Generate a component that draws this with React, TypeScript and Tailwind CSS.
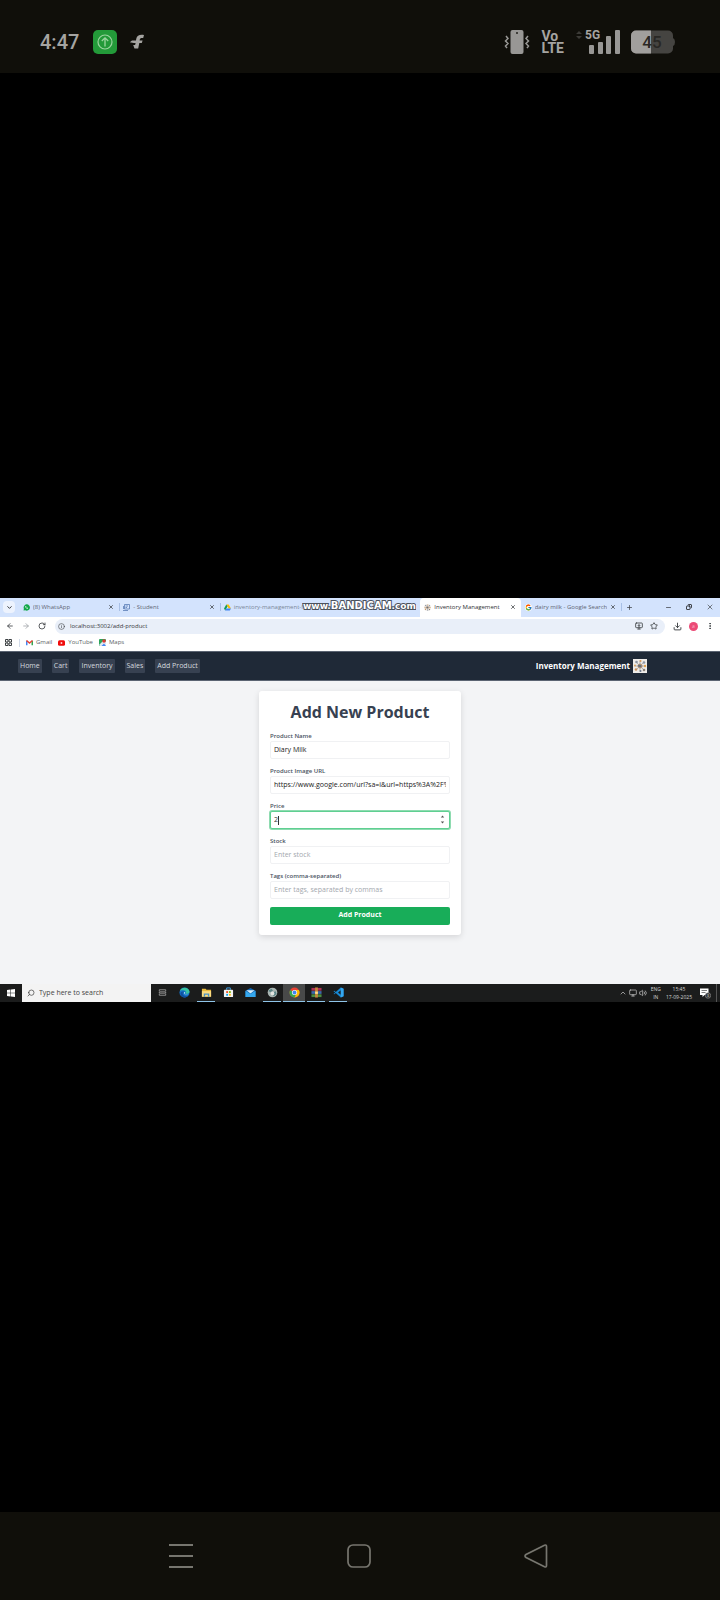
import React from "react";
import {
  ArrowLeft, ArrowRight, ChevronDown, ChevronUp, Download, Info, Minus,
  MonitorDown, Plus, RotateCw, Search, Star, X, Copy, EllipsisVertical, Volume2, Monitor,
} from "lucide-react";
import { FcGoogle } from "react-icons/fc";

const uiFont = "font-['Open_Sans','Noto_Sans',sans-serif]";

function Drive() {
  return (
    <svg viewBox="0 0 24 21" className="size-[7px] shrink-0">
      <path d="M8 0h8l8 14h-8z" fill="#fbbc04" />
      <path d="M8 0l4 7-8 14-4-7z" fill="#0f9d58" />
      <path d="M8 14h16l-4 7H4z" fill="#4285f4" />
    </svg>
  );
}

function WhatsApp() {
  return (
    <svg viewBox="0 0 14 14" className="size-[7px] shrink-0">
      <path d="M1 13l.8-3.500A6.300 6.300 0 1 1 4.500 12.500z" fill="#12a84a" />
      <path d="M4.500 4.500c0 3 2 5 5 5l.5-1.500-1.500-.8-.8.8-1.700-1.700.8-.8L6 4z" fill="#fff" />
    </svg>
  );
}

function PackageArt({ className }: { className: string }) {
  return (
    <svg viewBox="0 0 28 28" className={className}>
      <rect width="28" height="28" fill="#eeebe8" />
      <path d="M14 3v8M14 17v8M3 14h7M18 14h7M6 6l5 5M17 17l5 5M22 6l-5 5M11 17l-5 5" stroke="#8a8f99" strokeWidth="1.2" />
      <circle cx="14" cy="14" r="5" fill="#b99a7c" />
      <circle cx="7" cy="6" r="2.600" fill="#8b93a1" />
      <circle cx="15" cy="4" r="2" fill="#d99a55" />
      <circle cx="22" cy="7" r="2.600" fill="#8d97a8" />
      <circle cx="6" cy="21" r="2.600" fill="#c9915b" />
      <circle cx="15" cy="24" r="2" fill="#68758a" />
      <circle cx="22" cy="22" r="2.600" fill="#8a8078" />
      <circle cx="4" cy="13" r="2" fill="#d9a05b" />
      <circle cx="24" cy="14" r="2.400" fill="#e0a04c" />
      <path d="M10 12l4-1 3 2v3l-3 1-4-2z" fill="#68707e" />
    </svg>
  );
}

function StatusBar() {
  return (
    <header className="flex h-[73px] items-center bg-[#100f0a] pt-[11px] pr-[45px] pl-[40px] text-[#a5a4a1]">
      <span className="font-['Roboto',sans-serif] text-[20px] leading-6 font-medium">4:47</span>
      <svg viewBox="0 0 24 24" className="ml-[14px] size-6" fill="none">
        <rect width="24" height="24" rx="5" fill="#239a39" />
        <circle cx="12" cy="12" r="7" stroke="#9bd49f" strokeWidth="1.2" />
        <path d="M12 16.500V8M8.800 11l3.200-3.200 3.200 3.200" stroke="#9bd49f" strokeWidth="1.3" />
      </svg>
      <svg viewBox="0 0 16 16" className="ml-[12px] size-4">
        <path d="M15 1C10.500.3 8 1.500 7.200 5L7 6.500H3L.8 8.200l4 .8h1.800l-.5 2H4.200l1.300 3.500h3.700L10.300 9h2.500l.8-2.500h-3l.2-1c.2-1.200.9-1.800 3.400-1.500z" fill="#a5a4a1" />
      </svg>
      <div className="ml-auto flex items-center">
        <svg viewBox="0 0 26 26" className="size-[26px]" fill="none" stroke="#989795" strokeWidth="1.500">
          <rect x="6.500" y="1" width="13" height="24" rx="2" fill="#989795" stroke="none" />
          <circle cx="13" cy="4" r="1" fill="#22211d" stroke="none" />
          <path d="M2 7l2 2.500L1.500 12 4 14.500 1.500 17l1.500 2M24 7l-2 2.500 2.500 2.500-2.500 2.500 2.500 2.500-1.500 2" />
        </svg>
        <div className="ml-[11px] flex flex-col font-['Roboto',sans-serif] text-sm leading-3 font-bold">
          <span>Vo</span>
          <span>LTE</span>
        </div>
        <div className="relative ml-[12px] h-6 w-[44px]">
          <svg viewBox="0 0 44 24" className="size-full" fill="#989795">
            <path d="M0 4l3-3 3 3zM0 6l3 3 3-3z" fill="#3c3b37" />
            <rect x="13" y="15" width="5" height="9" rx="1" />
            <rect x="22" y="12" width="5" height="12" rx="1" />
            <rect x="30" y="6" width="5" height="18" rx="1" />
            <rect x="39" y="0" width="5" height="24" rx="1" />
          </svg>
          <span className="absolute top-0 left-[9px] font-['Roboto',sans-serif] text-xs leading-[10px] font-bold">5G</span>
        </div>
        <div className="relative ml-[11px] h-6 w-11">
          <svg viewBox="0 0 44 24" className="size-full">
            <rect width="42" height="23" y=".5" rx="5" fill="#454441" />
            <path d="M5 .5h15v23H5a5 5 0 0 1-5-5v-13a5 5 0 0 1 5-5z" fill="#a19f9d" />
            <path d="M42 8q2 1 2 4t-2 4z" fill="#454441" />
          </svg>
          <span className="absolute inset-x-0 top-0 pr-[2px] text-center font-['Roboto',sans-serif] text-[17px] leading-6 font-medium text-[#292825]">45</span>
        </div>
      </div>
    </header>
  );
}

function Tab({ icon, title, active, divided }: { icon: React.ReactNode; title: string; active?: boolean; divided?: boolean }) {
  return (
    <div className={`flex min-w-0 items-center gap-[3px] pr-[5px] pl-1 ${active ? "rounded-t-[4px] bg-white text-[#303134]" : "text-[#5f6673]"}`}>
      {divided && <span className="-ml-1 h-2 w-px bg-[#a8c0e6]" />}
      {icon}
      <span className="flex-1 overflow-hidden text-[6px] leading-[8px] whitespace-nowrap">{title}</span>
      <button aria-label={`Close ${title}`}><X className="size-[6px] text-[#3c4043]" strokeWidth={3} /></button>
    </div>
  );
}

function Browser() {
  return (
    <div>
      <div className="relative flex h-[19px] bg-[#d3e3fd]">
        <div className="flex w-[19px] items-center pl-[3px]">
          <button aria-label="Search tabs" className="flex size-3 items-center justify-center rounded-[4px] bg-[#edf3fe]">
            <ChevronDown className="size-[7px] text-[#202124]" strokeWidth={3} />
          </button>
        </div>
        <div className="grid min-w-0 flex-1 grid-cols-6">
          <Tab icon={<WhatsApp />} title="(8) WhatsApp" />
          <Tab divided icon={<svg viewBox="0 0 14 14" className="size-[7px] shrink-0" fill="none" stroke="#5276b0" strokeWidth="1.500"><path d="M3 1h10v9H3zM0 13h10M1 4v6M5 4h5M5 7h3" /></svg>} title="- Student" />
          <div className="col-span-2 flex items-center gap-[3px]">
            <span className="h-2 w-px bg-[#a8c0e6]" />
            <Drive />
            <span className="text-[6px] leading-[8px] whitespace-nowrap text-[#7b8799]">inventory-management-fr</span>
          </div>
          <Tab active icon={<PackageArt className="size-[7px] shrink-0 rounded-full" />} title="Inventory Management" />
          <Tab icon={<FcGoogle className="size-[7px] shrink-0 rounded-full bg-white" />} title="dairy milk - Google Search" />
        </div>
        <div className="flex w-[99px] items-center pr-[6px] text-[#3c4043]">
          <span className="h-2 w-px bg-[#a8c0e6]" />
          <button aria-label="New tab" className="ml-[4px]"><Plus className="size-[7px]" strokeWidth={2.500} /></button>
          <button aria-label="Minimize" className="ml-auto"><Minus className="size-[7px]" strokeWidth={2.500} /></button>
          <button aria-label="Restore" className="ml-[14px]"><Copy className="size-[6px] -scale-x-100 text-[#111]" strokeWidth={3} /></button>
          <button aria-label="Close window" className="ml-[14px]"><X className="size-[8px]" strokeWidth={2} /></button>
        </div>
        <svg viewBox="0 0 114 12" className="absolute top-[2px] left-[42%] h-3 w-[114px]">
          <g fill="#fff" stroke="#4c525d" strokeWidth="2" paintOrder="stroke" fontFamily="DejaVu Sans, sans-serif" fontWeight="bold">
            <text x="1" y="9" fontSize="9">www.<tspan fontSize="10">BANDICAM</tspan><tspan>.com</tspan></text>
          </g>
        </svg>
      </div>

      <div className="flex h-[19px] items-center bg-white pr-[6px] pl-[6px] text-[#3c4043]">
        <button aria-label="Back"><ArrowLeft className="size-[8px]" strokeWidth={2.500} /></button>
        <button aria-label="Forward" className="ml-[8px]"><ArrowRight className="size-[8px] text-[#a0a3a8]" strokeWidth={2.500} /></button>
        <button aria-label="Reload" className="ml-[8px]"><RotateCw className="size-[8px]" strokeWidth={2.500} /></button>
        <div className="ml-[9px] flex h-[15px] min-w-0 flex-1 items-center gap-[5px] rounded-full bg-[#e9eff9] pr-[7px] pl-[3px]">
          <Info className="size-[7px]" strokeWidth={2} />
          <input aria-label="Address" defaultValue="localhost:3002/add-product" className="h-[11px] min-w-0 flex-1 bg-transparent text-[6px] text-[#35373b] outline-none" />
          <MonitorDown className="size-[8px]" strokeWidth={2.500} />
          <Star className="ml-[2px] size-[8px]" strokeWidth={2.500} />
        </div>
        <button aria-label="Downloads" className="ml-[8px]"><Download className="size-[9px]" strokeWidth={2.500} /></button>
        <button aria-label="Profile" className="ml-[7px] size-[9px] rounded-full bg-[#ec4b77] text-center text-[5px] leading-[9px] text-[#f9b4c6]">a</button>
        <button aria-label="Menu" className="ml-[8px]"><EllipsisVertical className="size-[8px]" strokeWidth={3} /></button>
      </div>

      <div className="flex h-[15px] items-center bg-white pb-px pl-[5px] text-[6px] text-[#5b5f66]">
        <svg viewBox="0 0 14 14" className="size-[7px]" fill="none" stroke="#3c4043" strokeWidth="2"><path d="M1 1h5v5H1zM8 1h5v5H8zM1 8h5v5H1zM8 8h5v5H8z" /></svg>
        <span className="ml-[7px] h-2 w-px bg-[#d3dcea]" />
        <a href="#gmail" className="ml-[6px] flex items-center gap-[3px]">
          <svg viewBox="0 0 14 11" className="size-[7px]" fill="none">
            <path d="M1.500 11V2" stroke="#4285f4" strokeWidth="3" />
            <path d="M12.500 11V2" stroke="#34a853" strokeWidth="3" />
            <path d="M1 1.500l6 5 6-5" stroke="#ea4335" strokeWidth="3" />
          </svg>Gmail
        </a>
        <a href="#youtube" className="ml-[6px] flex items-center gap-[3px]">
          <svg viewBox="0 0 14 11" className="h-[6px] w-[7px]"><rect width="14" height="11" rx="3" fill="#f00b0b" /><path d="M5.500 3v5l4-2.500z" fill="#fff" /></svg>YouTube
        </a>
        <a href="#maps" className="ml-[6px] flex items-center gap-[3px]">
          <svg viewBox="0 0 14 14" className="size-[7px]">
            <rect width="14" height="14" rx="2" fill="#2da45b" /><path d="M0 12L10 2l4 4v8H2z" fill="#e2e8ef" /><path d="M5 14l5-5 4 5z" fill="#4285f4" /><circle cx="10" cy="4" r="3.500" fill="#e03a32" />
          </svg>Maps
        </a>
      </div>
    </div>
  );
}

const navItems = ["Home", "Cart", "Inventory", "Sales", "Add Product"];
const fieldClass = "block h-[18px] w-full rounded-[2px] border border-[#f0f1f3] bg-white px-[3px] text-[7px] text-[#222] outline-none placeholder:text-[#a3a7ae]";
const labelClass = "block h-[9px] text-[6px] leading-[9px] font-semibold text-[#4a5361]";

function Page() {
  return (
    <div className="bg-[#f3f4f6] pb-[49px]">
      <nav className="flex h-[30px] items-center border-t border-b border-[#5b6472] bg-[#1f2937] pt-px pr-[73px] pl-[18px]">
        <div className="flex gap-[10px]">
          {navItems.map((item) => (
            <a key={item} href={`#${item}`} className="h-[14px] rounded-[1px] bg-[#374151] px-[2px] text-[7px] leading-[13px] text-[#d5d9df]">{item}</a>
          ))}
        </div>
        <span className="ml-auto text-[8px] leading-[14px] font-bold text-white">Inventory Management</span>
        <PackageArt className="ml-[3px] size-[14px]" />
      </nav>
      <form onSubmit={(e) => e.preventDefault()} className="mx-auto mt-[10px] flex w-[202px] flex-col gap-2 rounded-[3px] bg-white px-[11px] pt-[11px] pb-[10px] shadow-[0_2px_6px_#00000020]">
        <h1 className="h-[22px] text-center text-[16px] leading-[20px] font-bold text-[#374151]">Add New Product</h1>
        <div>
          <label htmlFor="name" className={labelClass}>Product Name</label>
          <input id="name" defaultValue="Diary Milk" className={fieldClass} />
        </div>
        <div>
          <label htmlFor="image" className={labelClass}>Product Image URL</label>
          <input id="image" defaultValue="https://www.google.com/url?sa=i&url=https%3A%2F%2Fwww.google.com" className={fieldClass} />
        </div>
        <div>
          <label htmlFor="price" className={labelClass}>Price</label>
          <div className="relative flex h-[18px] items-center rounded-[2px] border border-[#5fcf91] bg-white pr-[4px] pl-[3px] ring-1 ring-[#8edbb0]">
            <input id="price" inputMode="numeric" defaultValue="2" className="h-[14px] min-w-0 flex-1 text-[7px] text-[#333] outline-none" />
            <span className="absolute top-[4px] left-[7px] h-[9px] w-px bg-[#333]" />
            <svg viewBox="0 0 5 9" className="h-[9px] w-[5px]" fill="#555"><path d="M.8 2.500l1.700-2 1.700 2zM.8 6.500l1.700 2 1.700-2z" /></svg>
          </div>
        </div>
        <div>
          <label htmlFor="stock" className={labelClass}>Stock</label>
          <input id="stock" placeholder="Enter stock" className={fieldClass} />
        </div>
        <div>
          <label htmlFor="tags" className={labelClass}>Tags (comma-separated)</label>
          <input id="tags" placeholder="Enter tags, separated by commas" className={fieldClass} />
        </div>
        <button className="h-[18px] rounded-[2px] bg-[#18ad59] text-[7px] font-bold text-white">Add Product</button>
      </form>
    </div>
  );
}

const apps: { name: string; open?: boolean; current?: boolean; art: React.ReactNode }[] = [
  { name: "Task view", art: <path d="M2 6V3h14v3M2 12v3h14v-3M2 7.500h14v3H2z" fill="none" stroke="#bbb" strokeWidth="1.500" /> },
  { name: "Edge", art: <><circle cx="12" cy="12" r="11" fill="#1673c8" /><path d="M2 8C5-1 22-1 23 10c0 5-6 6-9 4 3-4-1-8-6-7-3 0-5 1-6 1z" fill="#37c3a3" /><path d="M8 12c-1 6 5 10 12 7-7 8-17 2-17-5 0-4 7-6 9-3z" fill="#0f4f9e" /><path d="M11 11c3-1 3 2 2 4 2 3 6 2 8 0-5 5-11 1-10-4z" fill="#b7e4ee" /></> },
  { name: "File Explorer", open: true, art: <><path d="M2 4h8l2 2h10v15H2z" fill="#e9b93c" /><path d="M2 9h20v12H2z" fill="#fbdc82" /><path d="M6 21v-7h12v7h-3v-4H9v4z" fill="#4c92c4" /></> },
  { name: "Store", art: <><path d="M8 6V2h8v4" fill="none" stroke="#41a5ee" strokeWidth="2" /><rect x="2" y="6" width="20" height="16" rx="2" fill="#f4f4f4" /><path d="M7 9h4v4H7z" fill="#f25022" /><path d="M13 9h4v4h-4z" fill="#7fba00" /><path d="M7 15h4v4H7z" fill="#00a4ef" /><path d="M13 15h4v4h-4z" fill="#ffb900" /></> },
  { name: "Mail", art: <><path d="M1 8l11-6 11 6v14H1z" fill="#1267b4" /><path d="M1 8l11 7 11-7v14H1z" fill="#35a8ee" /><path d="M3 7h18l-9 7z" fill="#d7effc" /></> },
  { name: "Bandicam", open: true, art: <><circle cx="12" cy="12" r="10.500" fill="#a9b5b2" /><path d="M4 7l6-3 3 4-5 3-4-1M12 12l7-3 2 6-6 5-4-4" fill="#5b8587" /><circle cx="12" cy="14" r="4" fill="#e3e5e1" /></> },
  { name: "Chrome", open: true, current: true, art: <><circle cx="12" cy="12" r="11" fill="#ea4335" /><path d="M2.500 6.500A11 11 0 0 0 12 23l4.500-9L12 12z" fill="#34a853" /><path d="M12 23a11 11 0 0 0 9.500-16.500H12l4.500 7.500z" fill="#fbbc04" /><circle cx="12" cy="12" r="5.500" fill="#fff" /><circle cx="12" cy="12" r="4.200" fill="#4285f4" /></> },
  { name: "WinRAR", open: true, art: <><path d="M1 2h22v6H1z" fill="#ad3155" /><path d="M1 9h22v6H1z" fill="#3d68a8" /><path d="M1 16h22v6H1z" fill="#4b8b40" /><path d="M9 1h6v22H9z" fill="#c6863a" /><path d="M9 10h6v5H9z" fill="#ffe08a" /></> },
  { name: "VS Code", open: true, art: <><path d="M17 1l6 3v16l-6 3L6 13l-3 3-2-1 4-3-4-3 2-1 3 3z" fill="#1688d4" /><path d="M17 7v10l-6-5z" fill="#1c1c1c" /><path d="M17 1l6 3v16l-6 3z" fill="#35a7f0" /></> },
];

function Taskbar() {
  return (
    <footer className="flex h-[18px] items-stretch bg-[#1b1c1c] text-[#d4d4d4]">
      <button aria-label="Start" className="flex w-[22px] items-center justify-center">
        <svg viewBox="0 0 16 16" className="size-[8px]" fill="#fff"><path d="M0 2.200l7-1v6.300H0zM8 1l8-1v7.500H8zM0 8.500h7v6.300l-7-1zM8 8.500h8V16l-8-1z" /></svg>
      </button>
      <label className="flex w-[129px] items-center gap-[4px] bg-[#f3f3f3] pl-[5px]">
        <Search className="size-[8px] -scale-x-100 text-[#333]" strokeWidth={2} />
        <input aria-label="Search" placeholder="Type here to search" className="h-3 min-w-0 flex-1 text-[7px] outline-none placeholder:text-[#444]" />
      </label>
      {apps.map((app) => (
        <button key={app.name} aria-label={app.name} className={`flex w-[22px] items-center justify-center ${app.current ? "bg-[#484949]" : ""}`}>
          <span className={`flex h-full items-center justify-center border-b ${app.current ? "w-[22px]" : "w-[18px]"} ${app.open ? "border-[#8fc4e8]" : "border-transparent"}`}>
            <svg viewBox={app.name === "Task view" ? "-3 -3 24 24" : "0 0 24 24"} className="size-[11px]">{app.art}</svg>
          </span>
        </button>
      ))}
      <div className="ml-auto flex items-center pr-[3px]">
        <ChevronUp className="size-[8px]" strokeWidth={2} />
        <Monitor className="ml-[2px] size-[8px]" strokeWidth={2} />
        <Volume2 className="ml-[2px] size-[8px]" strokeWidth={2} />
        <div className="ml-[4px] flex flex-col text-center text-[5px] leading-[8px]"><span>ENG</span><span>IN</span></div>
        <div className="ml-[5px] flex flex-col text-center text-[5px] leading-[8px]"><span>15:45</span><span>17-09-2025</span></div>
        <svg viewBox="0 0 24 24" className="ml-[7px] size-[12px]">
          <path d="M2 3h17v13h-8l-4 4v-4H2z" fill="#fff" /><path d="M5 7h11M5 11h8" stroke="#555" strokeWidth="1.500" />
          <circle cx="18" cy="17" r="5.500" fill="#333" stroke="#aaa" />
          <text x="18" y="20" fontSize="8" textAnchor="middle" fill="#ddd">3</text>
        </svg>
        <span className="ml-[5px] h-[18px] w-px bg-[#555]" />
      </div>
    </footer>
  );
}

function NavigationBar() {
  return (
    <nav className="flex h-[88px] items-center justify-between bg-[#100f0a] pr-[171px] pl-[168px]">
      <button aria-label="Recent apps">
        <svg viewBox="0 0 26 26" className="size-[26px]" stroke="#77766f" strokeWidth="2"><path d="M1 2h24M1 13h24M1 24h24" /></svg>
      </button>
      <button aria-label="Home">
        <svg viewBox="0 0 26 26" className="size-[26px]" fill="none" stroke="#77766f" strokeWidth="1.700"><rect x="2" y="2" width="22" height="22" rx="5" /></svg>
      </button>
      <button aria-label="Back">
        <svg viewBox="0 0 26 26" className="size-[26px]" fill="none" stroke="#77766f" strokeWidth="1.700"><path d="M21.500 2.200L3 11.500q-2 1.500 0 3l18.500 9.300q2 .7 2-1.300v-19q0-2-2-1.300z" /></svg>
      </button>
    </nav>
  );
}

export default function App() {
  return (
    <div className="flex min-h-screen flex-col bg-black">
      <StatusBar />
      <main className={`flex flex-1 flex-col justify-center pt-[14px] ${uiFont}`}>
        <Browser />
        <Page />
        <Taskbar />
      </main>
      <NavigationBar />
    </div>
  );
}
